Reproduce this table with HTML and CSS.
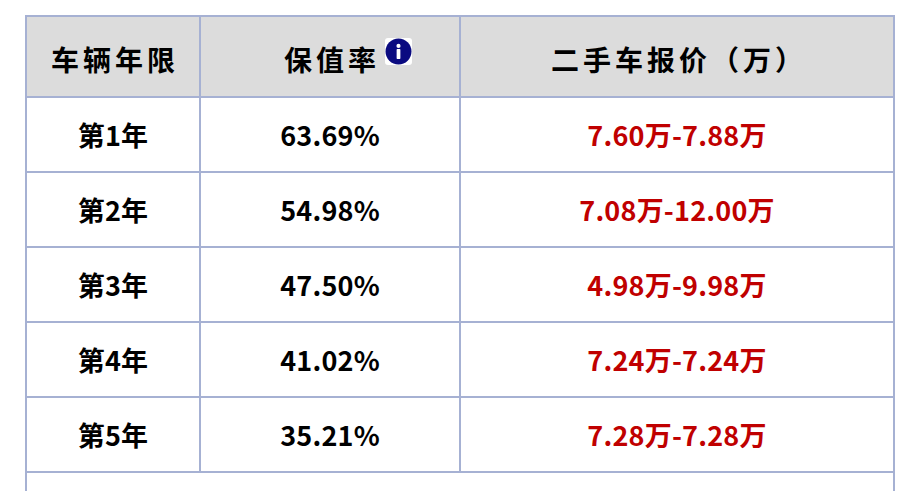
FILE: index.html
```html
<!DOCTYPE html>
<html lang="zh-CN">
<head>
<meta charset="utf-8">
<link rel="stylesheet" href="styles.css">
</head>
<body>
<div class="wrap">
<table class="resale">
  <colgroup>
    <col class="c1"><col class="c2"><col class="c3">
  </colgroup>
  <thead>
    <tr>
      <th>车辆年限</th>
      <th><span class="rate">保值率<span class="info"><svg viewBox="0 0 26 26" width="26" height="26"><circle cx="13" cy="13" r="12.5" fill="#0a0a80"/><circle cx="13" cy="7.6" r="2" fill="#fff"/><rect x="11.2" y="10.6" width="3.6" height="9.6" rx="0.6" fill="#fff"/></svg></span></span></th>
      <th>二手车报价（万）</th>
    </tr>
  </thead>
  <tbody>
    <tr><td>第1年</td><td>63.69%</td><td class="price">7.60万-7.88万</td></tr>
    <tr><td>第2年</td><td>54.98%</td><td class="price">7.08万-12.00万</td></tr>
    <tr><td>第3年</td><td>47.50%</td><td class="price">4.98万-9.98万</td></tr>
    <tr><td>第4年</td><td>41.02%</td><td class="price">7.24万-7.24万</td></tr>
    <tr><td>第5年</td><td>35.21%</td><td class="price">7.28万-7.28万</td></tr>
    <tr class="foot"><td colspan="3"></td></tr>
  </tbody>
</table>
</div>
</body>
</html>
```
FILE: styles.css
```css
html, body {
  margin: 0;
  padding: 0;
  background: #ffffff;
}
body {
  font-family: "Noto Sans CJK SC", "Noto Sans", sans-serif;
  color: #000000;
  overflow: hidden;
}
.wrap {
  padding: 15px 0 0 25px;
}
.resale {
  border-collapse: collapse;
  width: 868px;
  table-layout: fixed;
}
.c1 { width: 174px; }
.c2 { width: 260px; }
.c3 { width: 434px; }
.resale th,
.resale td {
  border: 2px solid #a6b1d3;
  text-align: center;
  vertical-align: middle;
  font-weight: 700;
  font-size: 27px;
  padding: 0;
  line-height: 1;
}
.resale th {
  background: #dcdcdc;
  height: 75px;
  font-size: 28px;
  letter-spacing: 4px;
  padding: 4px 0 0 4px;
}
.resale td {
  height: 73px;
  letter-spacing: 0.2px;
}
.resale td.price {
  color: #c00000;
}
.rate {
  position: relative;
  display: inline-block;
}
.info {
  position: absolute;
  left: 100%;
  top: -7px;
  margin-left: 5px;
  width: 27px;
  height: 27px;
  background: #fff;
  border-radius: 3px;
}
.info svg { display: block; width: 27px; height: 27px; }
.resale tr.foot td {
  height: 60px;
}
```
